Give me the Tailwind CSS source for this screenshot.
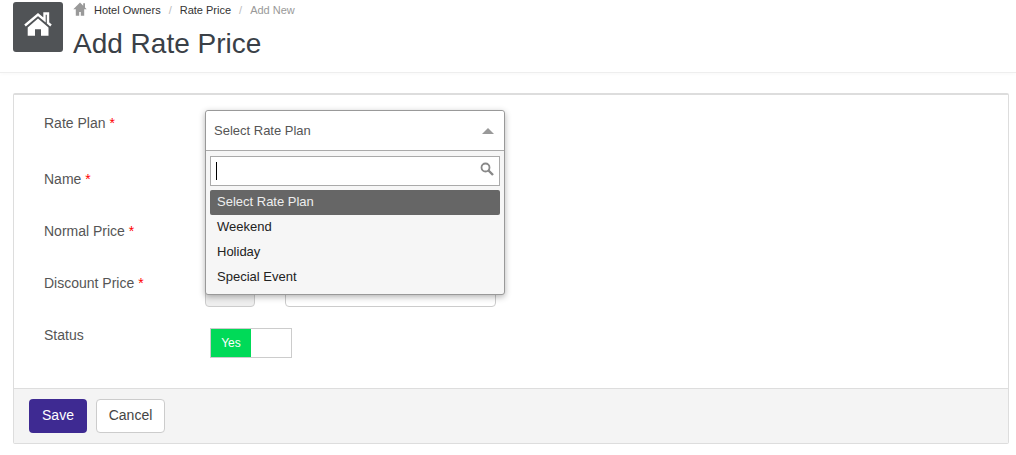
<!DOCTYPE html>
<html>
<head>
<meta charset="utf-8">
<script src="https://cdn.jsdelivr.net/npm/@tailwindcss/browser@4"></script>
</head>
<body class="bg-white font-['Liberation_Sans',Arial,sans-serif] text-[14px] text-[#333] overflow-hidden">
<header class="h-[73px] border-b border-[#eeeeee] shadow-[0_2px_3px_rgba(0,0,0,0.02)] flex pl-[13px] pt-[2px]">
  <div class="w-[50px] h-[50px] rounded-[3px] bg-[#505356]">
    <svg width="50" height="50" viewBox="13 2 50 50">
      <path d="M25 25.500 38 14.500l6.500 5.500v-6.500h3.500V23l3 2.500" fill="none" stroke="#fff" stroke-width="2.400"/>
      <path d="M38 18.500 48.500 27.500v8.200H41v-6.400h-6v6.400h-7.300v-8.200z" fill="#fff"/>
    </svg>
  </div>
  <div class="ml-[10px]">
    <nav class="flex items-center h-[17px] text-[11px] leading-[17px]">
      <svg width="14" height="14" viewBox="0 0 14 14" class="mb-[3px]"><path d="M7 .5.300 7.200H2.800V13.800h3.400V10h1.600v3.800h3.400V7.200h2.500L12 5.500V1.200h-1.800v2.600z" fill="#999"/></svg>
      <span class="ml-[7px] text-[#333]">Hotel Owners</span>
      <span class="mx-[8px] text-[#bbb]">/</span>
      <span class="text-[#333]">Rate Price</span>
      <span class="mx-[8px] text-[#bbb]">/</span>
      <span class="text-[#999]">Add New</span>
    </nav>
    <h1 class="text-[28px] leading-[34px] mt-[8px] font-normal text-[#3a4047]">Add Rate Price</h1>
  </div>
</header>

<main class="mx-[13px] mt-[20px] w-[996px] h-[351px] border border-[#dddddd] border-t-2 border-t-[#dddddd] rounded-[2px] flex flex-col">
  <form class="relative flex-1 pl-[30px] pt-[18px] text-[#555]">
    <div class="grid grid-cols-[161px_1fr] h-[56px]">
      <label class="leading-[20px]">Rate Plan <span class="text-[#ff0000]">*</span></label>
    </div>
    <div class="grid grid-cols-[161px_1fr] h-[52px]">
      <label class="leading-[20px]">Name <span class="text-[#ff0000]">*</span></label>
    </div>
    <div class="grid grid-cols-[161px_1fr] h-[52px]">
      <label class="leading-[20px]">Normal Price <span class="text-[#ff0000]">*</span></label>
    </div>
    <div class="grid grid-cols-[161px_1fr] h-[52px]">
      <label class="leading-[20px]">Discount Price <span class="text-[#ff0000]">*</span></label>
      <div class="flex gap-[30px] h-[34px]">
        <div class="w-[50px] h-[34px] border border-[#ccc] rounded-[4px] bg-[#eeeeee]"></div>
        <div class="w-[211px] h-[34px] border border-[#ccc] rounded-[4px] bg-white"></div>
      </div>
    </div>
    <div class="grid grid-cols-[161px_1fr]">
      <label class="leading-[20px]">Status</label>
      <div class="ml-[5px] w-[82px] h-[30px] mt-[3px] border border-[#ccc] flex bg-white">
        <span class="w-[40px] bg-[#00da58] text-white text-[12px] leading-[28px] text-center">Yes</span>
      </div>
    </div>

    <div class="absolute left-[191px] top-[15px] w-[300px] h-[185px] rounded-[3px] border border-[#999] bg-[#f6f6f6] shadow-[0_2px_6px_rgba(0,0,0,0.3)] z-10 text-[13px]">
      <div class="h-[40px] bg-white rounded-t-[3px] border-b border-[#aaa] flex items-center justify-between pl-[8px] pr-[10px] text-[#555]">
        <span>Select Rate Plan</span>
        <svg width="12" height="6" viewBox="0 0 12 6"><path d="M6 0 12 6H0z" fill="#999"/></svg>
      </div>
      <div class="px-[4px] pt-[5px]">
        <div class="h-[30px] border border-[#aaa] bg-white flex items-center justify-between pl-[5px] pr-[5px]">
          <span class="w-px h-[18px] bg-black"></span>
          <svg width="14" height="14" viewBox="0 0 14 14" class="mb-[5px]"><circle cx="5.500" cy="5.500" r="4" fill="none" stroke="#888" stroke-width="1.800"/><path d="M8.500 8.500 13 13" stroke="#888" stroke-width="2.400"/></svg>
        </div>
        <ul class="mt-[4px] text-[#222] leading-[23px]">
          <li class="h-[25px] px-[7px] bg-[#666666] text-[#eee] rounded-[2px]">Select Rate Plan</li>
          <li class="h-[25px] px-[7px]">Weekend</li>
          <li class="h-[25px] px-[7px]">Holiday</li>
          <li class="h-[25px] px-[7px]">Special Event</li>
        </ul>
      </div>
    </div>
  </form>
  <footer class="h-[55px] border-t border-[#dddddd] bg-[#f4f4f4] flex items-center pl-[15px] gap-[9px] pb-px">
    <button class="h-[34px] w-[58px] rounded-[4px] bg-[#3e2a92] text-white">Save</button>
    <button class="h-[34px] w-[69px] rounded-[4px] bg-white border border-[#ccc] text-[#444]">Cancel</button>
  </footer>
</main>
</body>
</html>
